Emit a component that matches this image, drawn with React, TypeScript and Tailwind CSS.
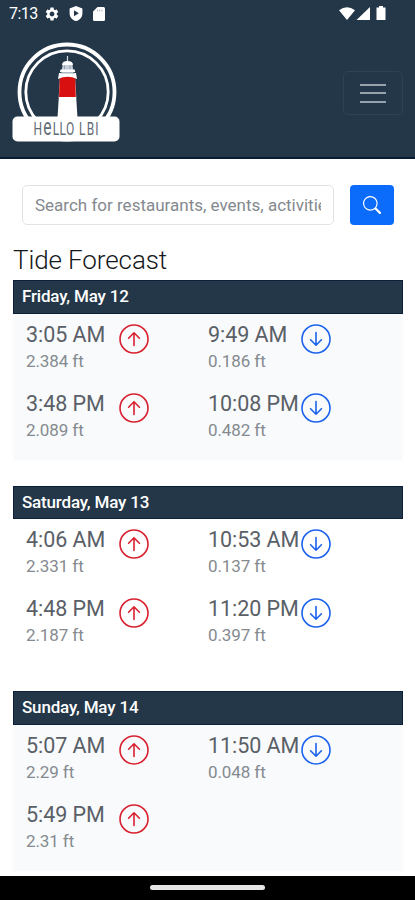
import React from "react";
import { BsSearch } from "react-icons/bs";
import { MdSettings } from "react-icons/md";

type Tide = { time: string; height: string };
type Day = { label: string; shaded: boolean; high: Tide[]; low: Tide[] };

const days: Day[] = [
  {
    label: "Friday, May 12",
    shaded: true,
    high: [{ time: "3:05 AM", height: "2.384 ft" }, { time: "3:48 PM", height: "2.089 ft" }],
    low: [{ time: "9:49 AM", height: "0.186 ft" }, { time: "10:08 PM", height: "0.482 ft" }],
  },
  {
    label: "Saturday, May 13",
    shaded: false,
    high: [{ time: "4:06 AM", height: "2.331 ft" }, { time: "4:48 PM", height: "2.187 ft" }],
    low: [{ time: "10:53 AM", height: "0.137 ft" }, { time: "11:20 PM", height: "0.397 ft" }],
  },
  {
    label: "Sunday, May 14",
    shaded: true,
    high: [{ time: "5:07 AM", height: "2.29 ft" }, { time: "5:49 PM", height: "2.31 ft" }],
    low: [{ time: "11:50 AM", height: "0.048 ft" }],
  },
];

function StatusBar() {
  return (
    <div className="flex h-[27px] items-center justify-between pl-[9px] pr-[28px] text-white">
      <div className="flex items-center">
        <span className="w-[35px] whitespace-nowrap text-[16px] leading-[27px] tracking-[-0.5px]">7:13</span>
        <MdSettings className="size-[16px]" />
        <svg className="ml-[9px] h-[15px] w-[14px]" viewBox="0 0 14 15">
          <path d="M7 0 13.4 2.5V7.4C13.4 11 10.8 14 7 15 3.200 14 .6 11 .6 7.400V2.500Z" fill="currentColor" />
          <path d="M5 4.300 9.800 7.300 5 10.300Z" fill="#243748" />
        </svg>
        <svg className="ml-[10px] h-[14px] w-[12px]" viewBox="0 0 12 14">
          <path d="M4.500 0H10.500Q12 0 12 1.500V12.500Q12 14 10.500 14H1.500Q0 14 0 12.500V4.500Z" fill="currentColor" />
          <path d="M4.500 2.500V4.500M6.700 2.500V4.500M8.900 2.500V4.500" stroke="#aab3bb" strokeWidth=".9" />
        </svg>
      </div>
      <svg className="h-[16px] w-[48px]" viewBox="0 0 48 16">
        <path d="M0 4.300Q8 -1.800 16 4.300L8 14Z" fill="currentColor" />
        <path d="M17.500 14 31 1V14Z" fill="currentColor" />
        <path d="M40 0H44V1.500H46.500V14H37.500V1.500H40Z" fill="currentColor" />
      </svg>
    </div>
  );
}

function Logo() {
  return (
    <svg className="h-[102px] w-[110px]" viewBox="11 41 110 102">
      <circle cx="67" cy="92" r="47.500" fill="none" stroke="white" strokeWidth="3.800" />
      <circle cx="67" cy="92" r="41.200" fill="none" stroke="white" strokeWidth="2.800" />
      <path d="M60 77H75L77.500 118H57.500Z" fill="white" />
      <path d="M59.800 77Q67 74 75.200 77L75.800 97H59Z" fill="#d8100f" />
      <path d="M67.500 56V62" stroke="#d6dce1" strokeWidth="1.200" />
      <path d="M62 65Q62 61 67.500 61Q73 61 73 65Z" fill="white" />
      <path d="M62.500 65H72.500L73.500 73H61.500Z" fill="#c6cfd7" />
      <path d="M64.500 65.500V69.500M70 65.500V69.500" stroke="#8d9aa5" strokeWidth=".9" />
      <path d="M60.500 69.500H74.700L75.200 72H60Z" fill="white" />
      <path d="M59 73H76L77 79Q67.500 74.500 58 79Z" fill="white" />
      <path d="M60.500 73H75" stroke="#909ca6" strokeWidth=".8" />
      <rect x="12.500" y="116.500" width="107" height="25" rx="5" fill="white" />
      <text transform="scale(.65 1)" y="135" fontFamily="Roboto, sans-serif" fontWeight="400" fontSize="18.500" fill="#5f6b75">
        <tspan x="51.500">H</tspan>
        <tspan x="66.500" fontSize="24">e</tspan>
        <tspan x="81 91.500 101.500">{"LLO "}</tspan>
        <tspan x="121.500 133.500 146.500">LBI</tspan>
      </text>
    </svg>
  );
}

function TideArrow({ rising }: { rising: boolean }) {
  return (
    <svg
      className={rising ? "mt-[2px] size-[30px] shrink-0 text-[#d9202f]" : "mt-[2px] size-[30px] shrink-0 text-[#1b63ee]"}
      viewBox="0 0 30 30"
      fill="none"
      stroke="currentColor"
      strokeWidth="1.600"
      strokeLinecap="round"
      strokeLinejoin="round"
    >
      <circle cx="15" cy="15" r="14" />
      {rising ? <path d="M15 21.500V9M9.600 14.200 15 8.800 20.400 14.200" /> : <path d="M15 8.500V21M9.600 15.800 15 21.200 20.400 15.800" />}
    </svg>
  );
}

function Column({ tides, rising }: { tides: Tide[]; rising: boolean }) {
  return (
    <div className="flex w-[182px] flex-col gap-[17px]">
      {tides.map((t) => (
        <div key={t.time} className="flex h-[52px]">
          <div className="w-[93px] whitespace-nowrap">
            <div className="text-[21.5px] leading-[26px] tracking-[-0.05px] text-[#5a6067]">{t.time}</div>
            <div className="text-[17px] leading-[26px] tracking-[-0.1px] text-[#858a8f]">{t.height}</div>
          </div>
          <TideArrow rising={rising} />
        </div>
      ))}
    </div>
  );
}

export default function App() {
  return (
    <div className="flex h-[900px] w-[415px] flex-col overflow-hidden bg-white font-['Roboto',sans-serif]">
      <header className="h-[159px] shrink-0 border-b-2 border-[#091a33] bg-[#243748]">
        <StatusBar />
        <div className="flex items-start justify-between pl-[11px] pr-[12px] pt-[14px]">
          <Logo />
          <button className="mt-[30px] flex h-[44px] w-[60px] flex-col items-center justify-center gap-[6.500px] rounded-[5px] border border-[#304252]">
            <span className="h-[2px] w-[26px] bg-[#98a2aa]" />
            <span className="h-[2px] w-[26px] bg-[#98a2aa]" />
            <span className="h-[2px] w-[26px] bg-[#98a2aa]" />
          </button>
        </div>
      </header>
      <main className="flex h-[717px] shrink-0 flex-col overflow-hidden pl-[13px] pr-[12px] pt-[26px]">
        <div className="flex h-[40px] shrink-0 justify-between pl-[9px] pr-[9px]">
          <div className="flex w-[312px] items-center rounded-[5px] border border-[#e1e4e7] px-[12px]">
            <span className="w-full overflow-hidden whitespace-nowrap text-[17px] leading-[26px] text-[#84898e]">
              Search for restaurants, events, activities
            </span>
          </div>
          <button className="flex w-[44px] items-center justify-center rounded-[4px] bg-[#0b6bfb] text-white">
            <BsSearch className="size-[18px]" />
          </button>
        </div>
        <h1 className="mt-[20px] h-[35px] shrink-0 text-[26px] font-light leading-[30px] tracking-[-0.1px] text-[#15181b]">Tide Forecast</h1>
        {days.map((d) => (
          <section key={d.label} className="h-[205.500px] shrink-0">
            <h2 className="h-[33.500px] border border-[#0d2039] bg-[#243748] pl-[8px] text-[17px] font-medium leading-[31px] tracking-[-0.18px] text-white">
              {d.label}
            </h2>
            <div className={d.shaded ? "flex h-[146.500px] bg-[#f8fafc] pl-[13px] pt-[8px]" : "flex h-[146.500px] pl-[13px] pt-[8px]"}>
              <Column tides={d.high} rising />
              <Column tides={d.low} rising={false} />
            </div>
          </section>
        ))}
      </main>
      <footer className="flex h-[24px] shrink-0 justify-center bg-black pt-[9px]">
        <div className="h-[5px] w-[115px] rounded-full bg-[#e6e6e6]" />
      </footer>
    </div>
  );
}
